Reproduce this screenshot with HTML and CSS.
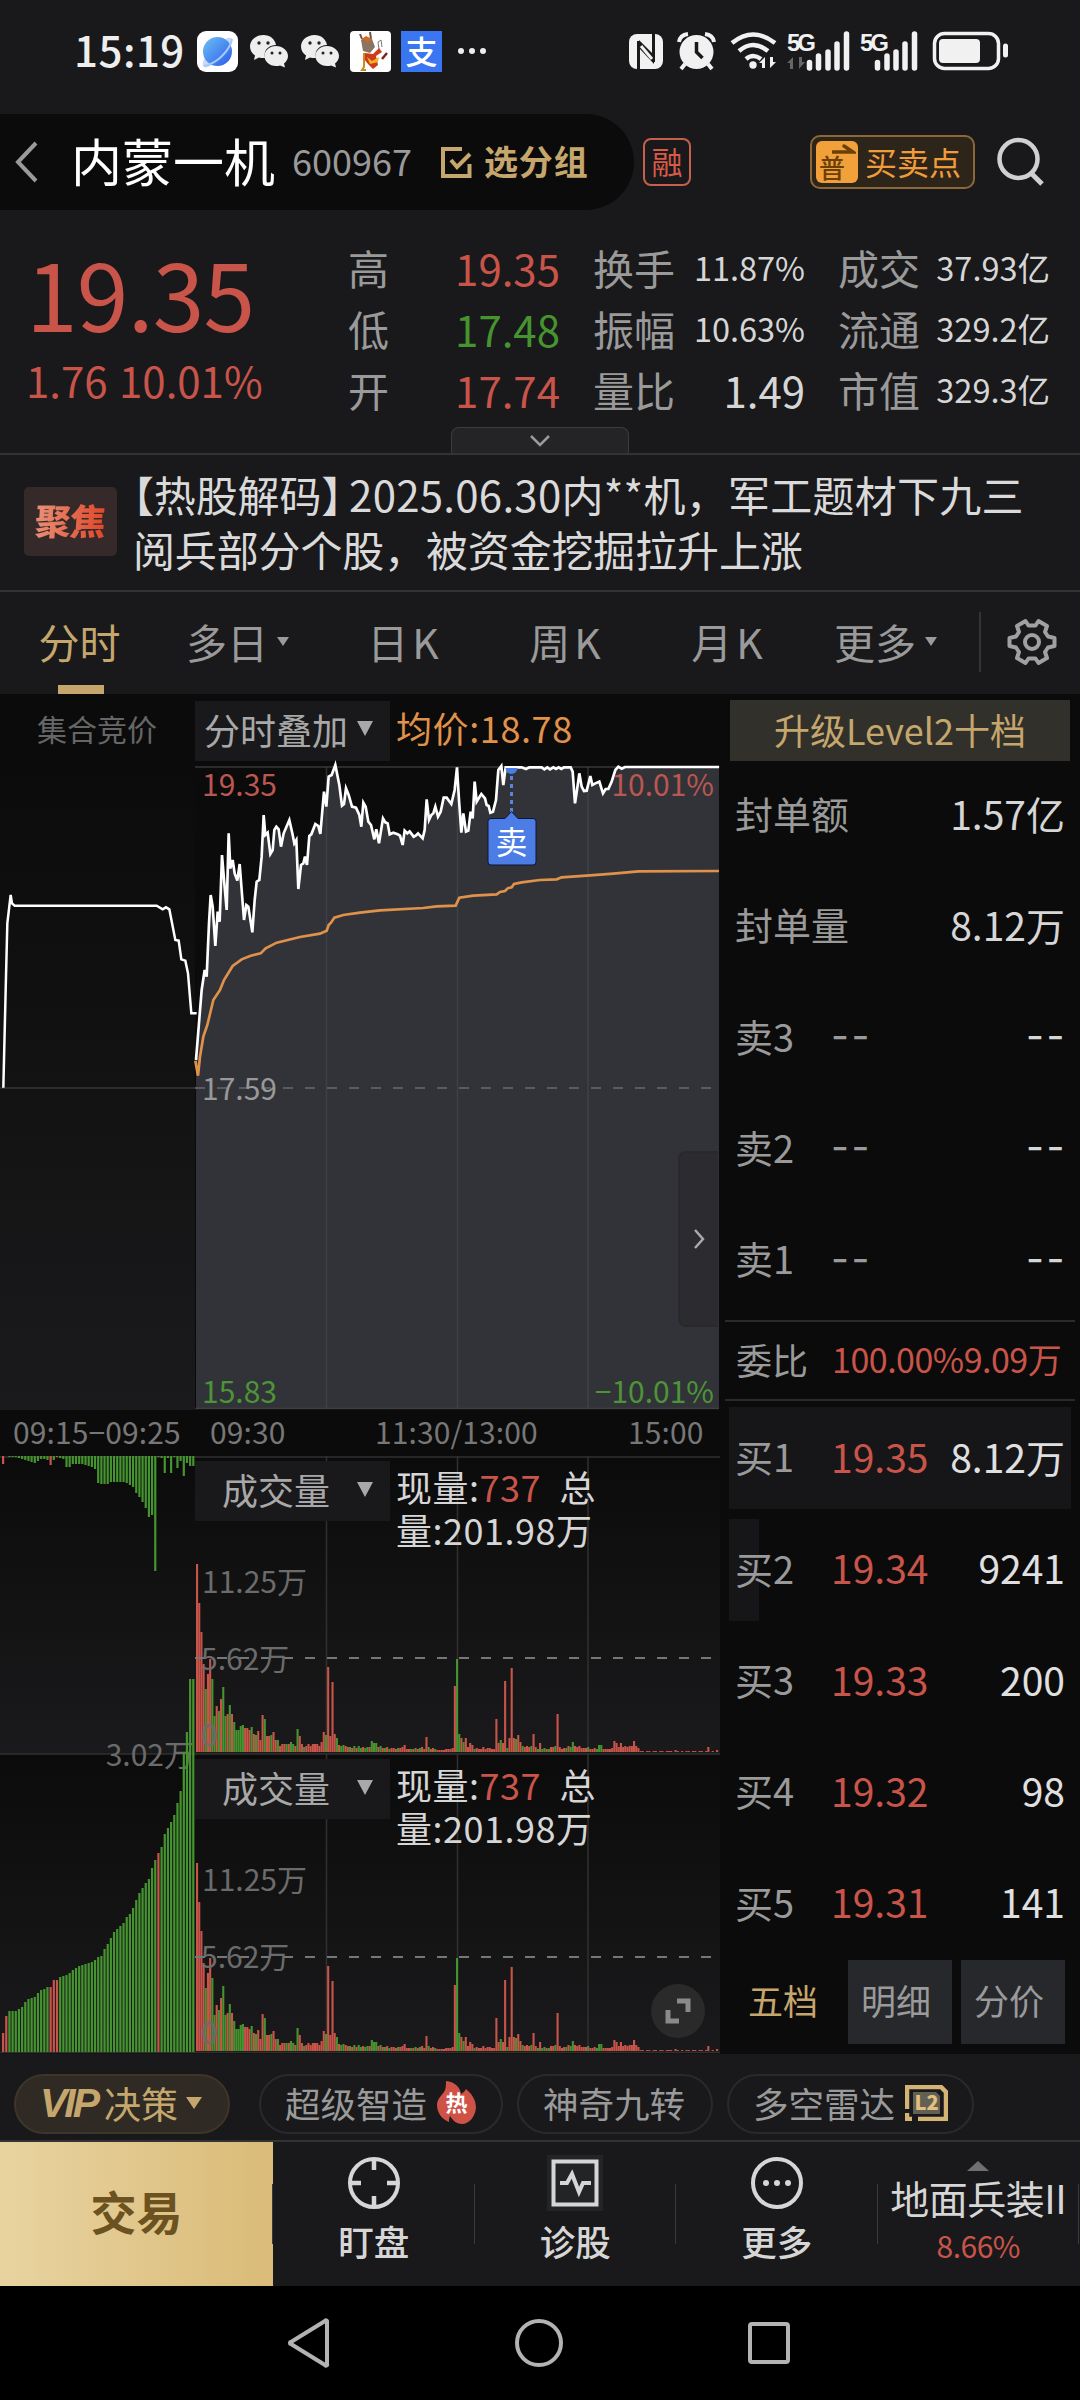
FILE: index.html
```html
<!DOCTYPE html>
<html lang="zh-CN">
<head>
    <meta charset="UTF-8">
    <meta name="viewport" content="width=device-width, initial-scale=1.0">
    <title>内蒙一机 600967</title>
    <link rel="stylesheet" href="styles.css">
</head>
<body>
    <!-- Status bar -->
    <div class="statusbar">
        <span class="clock">15:19</span>
        <svg class="st-app" width="41" height="41" viewBox="0 0 41 41">
            <defs>
                <linearGradient id="globe" x1="0" y1="0" x2="1" y2="1"><stop offset="0" stop-color="#6cc0f5"/><stop offset="1" stop-color="#2c5be8"/></linearGradient>
            </defs>
            <rect width="41" height="41" rx="9" fill="#fff"/>
            <path d="M7 36C3 34 9 22 17 15S34 5 35 8s-3 10-10 17S11 38 7 36z" fill="#c9d9fb"/>
            <circle cx="20.500" cy="20.500" r="14.500" fill="url(#globe)"/>
            <path d="M7 35c5-1 12-4 18-10S34 14 35 8" fill="none" stroke="#a9c8fa" stroke-width="2"/>
        </svg>
        <svg class="st-wechat" width="38" height="34" viewBox="0 0 38 34">
            <path d="M13.500 1C6 1 0 6 0 12.500c0 4 2 7 5 9L4 26l5-2.500c2 .5 4 .8 6 .5C13 16 19 11 26 11 25 5 20 1 13.500 1z" fill="#eee"/>
            <path d="M26 12c-6.500 0-11.500 4.500-11.500 10S19.500 32 26 32c1.500 0 3-.2 4-.6l5 2-1-4c2.500-1.800 4-4.500 4-7.400C38 16.500 32.500 12 26 12z" fill="#eee"/>
            <circle cx="9" cy="9" r="1.700" fill="#222"/><circle cx="18" cy="9" r="1.700" fill="#222"/><circle cx="22" cy="19" r="1.500" fill="#222"/><circle cx="30" cy="19" r="1.500" fill="#222"/>
        </svg>
        <svg class="st-wechat" width="38" height="34" viewBox="0 0 38 34">
            <path d="M13.500 1C6 1 0 6 0 12.500c0 4 2 7 5 9L4 26l5-2.500c2 .5 4 .8 6 .5C13 16 19 11 26 11 25 5 20 1 13.500 1z" fill="#eee"/>
            <path d="M26 12c-6.500 0-11.500 4.500-11.500 10S19.500 32 26 32c1.500 0 3-.2 4-.6l5 2-1-4c2.500-1.800 4-4.500 4-7.400C38 16.500 32.500 12 26 12z" fill="#eee"/>
            <circle cx="9" cy="9" r="1.700" fill="#222"/><circle cx="18" cy="9" r="1.700" fill="#222"/><circle cx="22" cy="19" r="1.500" fill="#222"/><circle cx="30" cy="19" r="1.500" fill="#222"/>
        </svg>
        <svg class="st-photo" width="41" height="41" viewBox="0 0 41 41">
            <rect width="41" height="41" rx="4" fill="#fff"/>
            <path d="M10 3l2 5M20 1l1 7" stroke="#665546" stroke-width="2"/>
            <path d="M11 9l4-3 7 2 3 8-5 6-7-2z" fill="#8b7560"/>
            <path d="M12 8l4-3 6 3-4 3z" fill="#d9661c"/>
            <path d="M15 22l8 1 6-6 3 4-6 4 2 9-5 4-5-5-4-5z" fill="#cf3a1c"/>
            <path d="M17 26l5 4 7-4-1 5-8 2z" fill="#f0b429"/>
            <path d="M29 18l-1-7 3-2 1 7" stroke="#777" fill="none"/>
            <path d="M14 22v14l-2 3h4" stroke="#c98b1e" stroke-width="2" fill="none"/>
            <path d="M32 28l5-6" stroke="#7b2614" stroke-width="2.500"/>
        </svg>
        <span class="st-alipay">支</span>
        <svg class="st-dots" width="30" height="8" viewBox="0 0 30 8"><circle cx="4" cy="4" r="3" fill="#eee"/><circle cx="15" cy="4" r="3" fill="#eee"/><circle cx="26" cy="4" r="3" fill="#eee"/></svg>

        <svg class="st-right" width="380" height="42" viewBox="630 30 380 42">
            <rect x="630" y="34" width="34" height="35" rx="8" fill="#f1f1f1"/>
            <path d="M639.500 70V41M654.500 62V33" fill="none" stroke="#19191b" stroke-width="3"/>
            <path d="M640 40l15 15v9L640 48z" fill="#19191b"/>
            <path d="M642 46l11 13" stroke="#f1f1f1" stroke-width="3"/>
            <circle cx="697.500" cy="52" r="17" fill="#f1f1f1"/>
            <path d="M680 42q1-7 9-8M706 34q8 1 9 8" stroke="#f1f1f1" stroke-width="4" fill="none"/>
            <path d="M686 64l-4 5M709 64l4 5" stroke="#f1f1f1" stroke-width="4"/>
            <path d="M697.500 42v10l6 6" stroke="#19191b" stroke-width="3.500" fill="none"/>
            <path d="M733 43q21-17 43 0M740 51q14-12 29 0M747 59q7-6 15 0" stroke="#f1f1f1" stroke-width="4.500" fill="none"/>
            <circle cx="754" cy="65" r="3.700" fill="#f1f1f1"/>
            <path d="M760 63l6-6v11h-3v-5zM777 62l-6 6V57h3v5z" fill="#f1f1f1"/>
            <text x="788" y="51" class="st-5g">5G</text>
            <path d="M788 63l6-6v12h-3v-6zM806 62l-6 7V57h3v5z" fill="#666"/>
            <path d="M810.500 62.500v5.500M819.500 56v12M829 52v16M838 44v24M847.500 34v34" stroke="#f1f1f1" stroke-width="5.500" stroke-linecap="round"/>
            <text x="861" y="51" class="st-5g">5G</text>
            <path d="M878.500 62.500v5.500M888 56v12M897 52v16M906 44v24M915.500 34v34" stroke="#f1f1f1" stroke-width="5.500" stroke-linecap="round"/>
            <rect x="935.500" y="33.500" width="64" height="35" rx="10" fill="none" stroke="#f1f1f1" stroke-width="3.500"/>
            <rect x="940" y="39" width="41" height="24" rx="4" fill="#f1f1f1"/>
            <path d="M1006.500 46v9" stroke="#f1f1f1" stroke-width="5" stroke-linecap="round"/>
        </svg>
    </div>

    <!-- Stock title -->
    <header class="topbar">
        <div class="title-pill">
            <svg width="24" height="42" viewBox="0 0 24 42"><path d="M21 2L3 21l18 19" fill="none" stroke="#9a9a9a" stroke-width="4"/></svg>
            <h1>内蒙一机</h1>
            <span class="code">600967</span>
            <svg class="check" width="31" height="31" viewBox="0 0 31 31"><path d="M21 2H2v27h26.500V17M10 13l6 7L29 7" fill="none" stroke="#c5a76e" stroke-width="4"/></svg>
            <span class="group">选分组</span>
        </div>
        <span class="margin-tag">融</span>
        <div class="trade-points">
            <span class="pu"><svg width="24" height="10" viewBox="0 0 24 10"><path d="M1 8h20L12 2" fill="none" stroke="#6b3f08" stroke-width="3.500" stroke-linecap="round"/></svg><b>普</b></span>
            <span class="tp-label">买卖点</span>
        </div>
        <svg class="search" width="48" height="50" viewBox="0 0 48 50"><circle cx="21.500" cy="22" r="19" fill="none" stroke="#d0d0d0" stroke-width="4.500"/><path d="M34 36l11 11" stroke="#d0d0d0" stroke-width="5"/></svg>
    </header>

    <!-- Quote -->
    <section class="quote">
        <div class="last">
            <div class="price">19.35</div>
            <div class="change">1.76 10.01%</div>
        </div>
        <dl class="stats">
            <dt>高</dt><dd class="up big">19.35</dd><dt>换手</dt><dd>11.87%</dd><dt>成交</dt><dd>37.93亿</dd>
            <dt>低</dt><dd class="down big">17.48</dd><dt>振幅</dt><dd>10.63%</dd><dt>流通</dt><dd>329.2亿</dd>
            <dt>开</dt><dd class="up big">17.74</dd><dt>量比</dt><dd class="big">1.49</dd><dt>市值</dt><dd>329.3亿</dd>
        </dl>
        <div class="pull"><svg width="22" height="13" viewBox="0 0 22 13"><path d="M2 2l9 9 9-9" fill="none" stroke="#9a9a9a" stroke-width="2.500"/></svg></div>
    </section>

    <section class="news">
        <span class="focus"><i>聚焦</i></span>
        <p><span class="tag">【热股解码】</span><span class="lead">2025.06.30内**机，军工题材下九三</span><br>阅兵部分个股，被资金挖掘拉升上涨</p>
    </section>

    <nav class="periods">
        <a class="active">分时</a>
        <a class="more">多日<i class="tri"></i></a>
        <a class="k">日K</a>
        <a class="k">周K</a>
        <a class="k">月K</a>
        <a class="more">更多<i class="tri"></i></a>
        <span class="gear"><svg width="52" height="52" viewBox="0 0 52 52"><path d="M19.500 5l3 4.500h7l3-4.500 8.500 5-2 6 3 4.500 6.500 1.500v8L42 31.500 39 36l2 6-8.500 5-3-4.500h-7l-3 4.500-8.500-5 2-6-3-4.500L3.500 30v-8l6.500-1.500 3-4.500-2-6z" fill="none" stroke="#a0a0a0" stroke-width="4" stroke-linejoin="round"/><circle cx="26" cy="26" r="7" fill="none" stroke="#a0a0a0" stroke-width="4"/></svg></span>
    </nav>

    <main class="board">
        <div class="charts">
            <div class="chart-head">
                <span class="auction">集合竞价</span>
                <span class="select">分时叠加<i class="arrow"></i></span>
                <span class="avg">均价:18.78</span>
            </div>

            <div class="price-chart">
                <svg width="720" height="650" viewBox="0 760 720 650">
                    <defs>
                        <linearGradient id="panel" x1="0" y1="0" x2="0" y2="1"><stop offset="0" stop-color="#0b0b0b"/><stop offset="1" stop-color="#1a1a1c"/></linearGradient>
                    </defs>
                    <rect x="0" y="760" width="195" height="650" fill="url(#panel)"/>
                    <path d="M195 767H720M0 1088H196" stroke="#2c2c2d" stroke-width="2"/>
                    <g transform="translate(0 690) scale(.33333)">
                        <polygon id="area" fill="#323338"/>
                    </g>
                    <path d="M326.500 767V1409M457.500 767V1409M588 767V1409M195 1408.500H719" stroke="#48494c" stroke-width="1.500" opacity=".6"/>
                    <path d="M195 1088H716" stroke="#5a5b5f" stroke-width="2" stroke-dasharray="10 12"/>
                    <g fill="none" stroke-width="7.500" transform="translate(0 690) scale(.33333)">
                        <polyline stroke="#fff" points="10,1193 17,900 22,700 32,615 36,640 44,647 470,647 488,658 498,652 508,658 526,750 536,752 544,808 556,812 564,850 574,970 590,970"/>
                        <polyline id="average" stroke="#e0924a" stroke-width="8" points="586,1112 594,1157 600,1100 610,1040 622,1005 640,930 660,900 672,870 698,828 725,808 750,798 782,790 797,775 830,758 900,741 960,731 980,722 986,705 993,698 1003,683 1030,675 1080,668 1140,661 1270,654 1310,649 1367,647 1378,623 1420,617 1490,613 1500,606 1515,603 1523,595 1535,592 1542,582 1565,577 1620,570 1670,568 1685,562 1770,556 1840,551 1915,544 2157,543"/>
                        <polyline id="line" stroke="#fff" stroke-width="8" points="588,1110 605,900 614,840 620,860 627,700 632,615 638,650 646,768 653,665 659,695 666,495 673,580 680,660 686,430 691,535 698,510 704,550 712,572 719,522 725,600 732,690 739,645 745,650 757,727 764,630 770,575 778,570 785,500 791,375 796,435 803,428 811,492 818,480 823,420 829,410 836,418 843,470 851,430 868,390 877,430 883,460 889,450 895,597 903,525 910,520 915,500 921,525 928,438 934,433 946,402 955,408 961,432 972,305 979,350 986,260 995,255 1006,225 1018,285 1026,347 1032,342 1038,295 1046,315 1056,350 1068,353 1078,375 1084,410 1090,338 1097,350 1105,395 1113,405 1123,448 1129,418 1137,460 1149,385 1156,397 1163,400 1169,433 1180,428 1193,433 1200,437 1208,465 1214,422 1222,430 1229,424 1241,440 1248,436 1254,430 1268,445 1274,420 1280,328 1287,390 1294,375 1300,370 1306,350 1314,380 1322,365 1331,323 1340,323 1354,342 1364,300 1371,232 1377,330 1384,428 1390,370 1398,425 1405,422 1412,365 1418,385 1424,275 1430,335 1436,325 1444,312 1455,325 1460,345 1466,348 1471,368 1479,365 1488,330 1495,240 1504,228 1510,285 1517,232 1565,232 1578,237 1588,232 1625,232 1633,238 1642,232 1650,238 1660,232 1668,237 1676,232 1684,237 1692,232 1712,232 1718,245 1725,340 1731,300 1738,250 1745,290 1752,303 1760,302 1771,258 1777,285 1786,280 1798,275 1809,310 1817,297 1825,297 1835,275 1846,240 1855,230 1865,236 1875,231 2157,231"/>
                    </g>
                    <path d="M505.500 768a6 6 0 0 0 12 0z" fill="#4c7ce6"/>
                    <path d="M511.500 776V812" stroke="#5d83d8" stroke-width="3" stroke-dasharray="4 4"/>
                    <path d="M491 818.500H505l6.500-7 6.500 7H533q3 0 3 3V862q0 3-3 3H491q-3 0-3-3V821.500q0-3 3-3z" fill="#4c7ce6" stroke="#0c1636"/>
                    <text x="511.500" y="854" text-anchor="middle" class="sell">卖</text>
                    <g class="axis">
                        <text x="202" y="796" class="r">19.35</text>
                        <text x="714" y="796" class="r" text-anchor="end">10.01%</text>
                        <text x="202" y="1100">17.59</text>
                        <text x="202" y="1403" class="g">15.83</text>
                        <text x="714" y="1403" class="g" text-anchor="end">−10.01%</text>
                    </g>
                </svg>
                <span class="drawer"><svg width="12" height="20" viewBox="0 0 12 20"><path d="M2 1l8 9-8 9" fill="none" stroke="#aaa" stroke-width="2.500"/></svg></span>
            </div>

            <div class="times"><span>09:15−09:25</span><span>09:30</span><span>11:30/13:00</span><span>15:00</span></div>

            <div class="volume">
                <svg width="720" height="298" viewBox="0 0 720 298">
                    <rect y="0" width="720" height="298" fill="url(#panel)"/>
                    <path d="M0 1H720M326.500 0V296M457.500 0V296M588 0V296" stroke="#303031" stroke-width="1.500"/>
                    <g id="auction-bars"></g>
                    <g class="session-bars"></g>
                    <path d="M195 202H712" stroke="#777" stroke-width="2" stroke-dasharray="10 12"/>
                    <g class="axis dim"><text x="202" y="137">11.25万</text><text x="201" y="214">5.62万</text><text x="201" y="290">0</text></g>
                </svg>
                <div class="vol-head"><span class="select">成交量<i class="arrow"></i></span><p>现量:<em>737</em>&ensp;总<br>量:201.98万</p></div>
            </div>
            <div class="volume">
                <svg width="720" height="299" viewBox="0 0 720 299">
                    <rect y="0" width="720" height="299" fill="url(#panel)"/>
                    <path d="M0 0H720M326.500 0V298M457.500 0V298M588 0V298M0 298.500H720" stroke="#303031" stroke-width="1.500"/>
                    <g class="axis dim"><text x="194" y="12" text-anchor="end">3.02万</text></g>
                    <g id="match-bars"></g>
                    <g class="session-bars" transform="translate(0 1)"></g>
                    <path d="M195 203H712" stroke="#777" stroke-width="2" stroke-dasharray="10 12"/>
                    <g class="axis dim"><text x="202" y="137">11.25万</text><text x="201" y="214">5.62万</text><text x="201" y="290">0</text></g>
                </svg>
                <div class="vol-head"><span class="select">成交量<i class="arrow"></i></span><p>现量:<em>737</em>&ensp;总<br>量:201.98万</p></div>
                <span class="expand"><svg width="26" height="26" viewBox="0 0 26 26"><path d="M12 3h11v11M3 12v11h11" fill="none" stroke="#8a8a8a" stroke-width="5"/></svg></span>
            </div>
        </div>

        <!-- Order book -->
        <aside class="book">
            <a class="level2">升级Level2十档</a>
            <div class="row"><span>封单额</span><b>1.57亿</b></div>
            <div class="row"><span>封单量</span><b>8.12万</b></div>
            <div class="row"><span>卖3</span><s>--</s><b class="none">--</b></div>
            <div class="row"><span>卖2</span><s>--</s><b class="none">--</b></div>
            <div class="row"><span>卖1</span><s>--</s><b class="none">--</b></div>
            <div class="ratio"><span>委比</span><em>100.00%9.09万</em></div>
            <div class="row bid full"><span>买1</span><em>19.35</em><b>8.12万</b></div>
            <div class="row bid part"><span>买2</span><em>19.34</em><b>9241</b></div>
            <div class="row bid"><span>买3</span><em>19.33</em><b>200</b></div>
            <div class="row bid"><span>买4</span><em>19.32</em><b>98</b></div>
            <div class="row bid"><span>买5</span><em>19.31</em><b>141</b></div>
            <div class="book-tabs"><a class="on">五档</a><a>明细</a><a>分价</a></div>
        </aside>
    </main>

    <section class="tools">
        <a class="vip"><b>VIP</b>决策<i class="tri"></i></a>
        <a class="t1">超级智造<svg width="40" height="44" viewBox="0 0 40 44"><path d="M9 0c8 1 14 5 15 13 2-1 4-3 5-5 6 5 10 11 10 19-1 9-7 16-14 16-5 0-9-3-12-8-1 2-1 4-1 6C5 38 0 32 0 24 0 17 6 14 8 9c1-3 1-6 1-9z" fill="#cf5246"/><text x="19.500" y="30" text-anchor="middle" class="hot">热</text></svg></a>
        <a class="t2">神奇九转</a>
        <a class="t3">多空雷达<svg width="43" height="36" viewBox="0 0 43 36"><path d="M2 24V2h34l5 5v27H13M2 28v6h5" fill="none" stroke="#d3b475" stroke-width="4.500"/><path d="M8 7h23l4 4v18H8z" fill="#625f55"/><text x="21.500" y="25" text-anchor="middle" class="l2">L2</text></svg></a>
    </section>

    <footer class="actions">
        <a class="trade">交易</a>
        <a><svg width="56" height="56" viewBox="0 0 56 56"><circle cx="28" cy="28" r="24" fill="none" stroke="#d6d6d6" stroke-width="4"/><path d="M28 4v11M28 41v11M4 28h11M41 28h11" stroke="#d6d6d6" stroke-width="4.500"/></svg>盯盘</a>
        <a><svg width="56" height="56" viewBox="0 0 56 56"><path d="M0 0h56v56H0z" fill="#222426"/><path d="M6.500 6.500h43v43h-43z" fill="none" stroke="#d6d6d6" stroke-width="4"/><path d="M13 28h7l5-9 7 18 4-9h8" fill="none" stroke="#d6d6d6" stroke-width="4"/></svg>诊股</a>
        <a><svg width="56" height="56" viewBox="0 0 56 56"><circle cx="28" cy="28" r="24" fill="none" stroke="#d6d6d6" stroke-width="4"/><circle cx="17" cy="28" r="3" fill="#d6d6d6"/><circle cx="28" cy="28" r="3" fill="#d6d6d6"/><circle cx="39" cy="28" r="3" fill="#d6d6d6"/></svg>更多</a>
        <a class="sector"><i></i><span>地面兵装II</span><em>8.66%</em></a>
    </footer>

    <div class="sysnav">
        <svg width="44" height="50" viewBox="0 0 44 50"><path d="M40 4v42a1 1 0 0 1-2 1L4 26a1 1 0 0 1 0-2L38 3a1 1 0 0 1 2 1z" fill="none" stroke="#b3b3b3" stroke-width="4"/></svg>
        <svg width="50" height="50" viewBox="0 0 50 50"><circle cx="25" cy="25" r="22" fill="none" stroke="#b3b3b3" stroke-width="4"/></svg>
        <svg width="44" height="44" viewBox="0 0 44 44"><rect x="3" y="3" width="38" height="38" rx="2" fill="none" stroke="#b3b3b3" stroke-width="4"/></svg>
    </div>

    <script src="chart.js"></script>
</body>
</html>
```
FILE: styles.css
```css
* {
    box-sizing: border-box;
}
body {
    margin: 0;
    width: 1080px;
    height: 2400px;
    overflow: hidden;
    background: #19191b;
    color: #d6d6d6;
    font-family: "Noto Sans CJK SC", sans-serif;
    font-size: 38px;
    line-height: 1;
}
svg {
    display: block;
    flex: none;
}
i, em {
    font-style: normal;
}
h1, p, dl, dd {
    margin: 0;
    font-weight: normal;
}
.up, em {
    color: #c8544a;
}
.down {
    color: #45942f;
}

/* Status bar */
.statusbar {
    display: flex;
    align-items: center;
    height: 114px;
    padding: 0 71px 12px 74px;
}
.clock {
    width: 123px;
    padding-bottom: 5px;
    color: #eee;
    font-size: 42px;
    font-weight: 500;
    letter-spacing: .5px;
}
.st-wechat {
    margin-left: 12px;
}
.st-app + .st-wechat + .st-wechat {
    margin-left: 13px;
}
.st-photo {
    margin-left: 11px;
}
.st-alipay {
    width: 41px;
    height: 41px;
    margin-left: 10px;
    background: #3a75f2;
    color: #fff;
    font-size: 32px;
    font-weight: 500;
    line-height: 38px;
    text-align: center;
}
.st-dots {
    margin-left: 15px;
}
.st-right {
    margin-left: auto;
}
.st-5g {
    fill: #f1f1f1;
    font-family: "Liberation Sans", sans-serif;
    font-size: 24px;
    font-weight: bold;
    letter-spacing: -3px;
}

/* Title */
.topbar {
    display: flex;
    align-items: center;
    height: 96px;
}
.title-pill {
    display: flex;
    align-items: center;
    width: 634px;
    height: 96px;
    padding-left: 15px;
    background: #0b0b0b;
    border-radius: 0 48px 48px 0;
}
.title-pill h1 {
    margin-left: 32px;
    padding-bottom: 3px;
    color: #fff;
    font-size: 51px;
}
.code {
    margin-left: 17px;
    padding-bottom: 4px;
    color: #9a9a9a;
    font-size: 36px;
}
.check {
    margin-left: 29px;
}
.group {
    margin-left: 12px;
    padding-bottom: 3px;
    color: #c5a76e;
    font-size: 34px;
    font-weight: bold;
    letter-spacing: .9px;
}
.margin-tag {
    width: 48px;
    height: 48px;
    margin-left: 9px;
    border: 2px solid #c4604c;
    border-radius: 8px;
    color: #d85a47;
    font-size: 31px;
    line-height: 42px;
    text-align: center;
}
.trade-points {
    display: flex;
    align-items: center;
    width: 165px;
    height: 54px;
    margin-left: 119px;
    padding-left: 4px;
    border: 2px solid #8c6838;
    border-radius: 10px;
    background: #2d241a;
    color: #f09c39;
    font-size: 32px;
}
.tp-label {
    padding-bottom: 3px;
}
.pu {
    display: flex;
    flex-direction: column;
    width: 42px;
    height: 42px;
    margin-right: 7px;
    padding: 3px 0 0 3px;
    border-radius: 6px;
    background: #f2a03a;
    color: #6b3f08;
}
.pu svg {
    margin-left: 13px;
}
.pu b {
    font-size: 26px;
    line-height: 26px;
    font-weight: 500;
}
.search {
    margin-left: 22px;
}

/* Quote */
.quote {
    position: relative;
    display: flex;
    height: 245px;
    border-bottom: 2px solid #333334;
}
.last {
    width: 350px;
    padding-left: 26px;
    color: #c8544a;
}
.price {
    margin-top: 35px;
    font-size: 93px;
    letter-spacing: -.8px;
}
.change {
    margin-top: 21px;
    font-size: 42px;
    word-spacing: 2px;
    white-space: nowrap;
}
.stats {
    display: grid;
    grid-template-columns: 80px 132px 115px 130px 115px 130px;
    grid-auto-rows: 61px;
    align-items: center;
    margin: 27px 0 0 -2px;
}
.stats dt {
    color: #9a9a9a;
    font-size: 41px;
}
.stats dt:nth-of-type(3n+2), .stats dt:nth-of-type(3n) {
    padding-left: 33px;
    white-space: nowrap;
}
.stats dd {
    font-size: 32.500px;
    text-align: right;
    white-space: nowrap;
}
.stats .big {
    font-size: 42px;
}
.pull {
    position: absolute;
    left: 451px;
    bottom: 0;
    display: flex;
    align-items: center;
    justify-content: center;
    width: 178px;
    height: 26px;
    border: 1px solid #3c3c3e;
    border-bottom: 0;
    border-radius: 8px 8px 0 0;
    background: #242426;
}

.news {
    display: flex;
    height: 137px;
    border-bottom: 2px solid #333334;
    color: #dadada;
}
.focus {
    width: 93px;
    height: 69px;
    margin: 32px 16px 0 24px;
    border-radius: 5px;
    background: #352a29;
    text-align: center;
    line-height: 64px;
}
.focus i {
    display: inline-block;
    font-size: 36px;
    font-weight: 900;
    letter-spacing: -1px;
    color: transparent;
    background: linear-gradient(90deg, #e89077, #e0482b);
    background-clip: text;
    -webkit-background-clip: text;
    transform: skewX(-4deg);
}
.news p {
    padding-top: 11px;
    font-size: 42px;
    line-height: 55px;
    letter-spacing: -.15px;
    white-space: nowrap;
}
.tag {
    margin-right: 7px;
    font-feature-settings: "halt";
}
.lead {
    letter-spacing: .25px;
}

/* Period tabs */
.periods {
    display: flex;
    height: 102px;
    color: #9a9a9a;
    font-size: 41px;
}
.periods a {
    display: flex;
    align-items: center;
    justify-content: center;
    position: relative;
    width: 162px;
    padding-bottom: 3px;
}
.periods .more {
    padding-right: 11px;
}
.periods .k {
    letter-spacing: 4px;
}
.periods .active {
    padding-right: 3px;
    color: #c5a76e;
}
.periods .active::after {
    content: "";
    position: absolute;
    left: 58px;
    bottom: 0;
    width: 46px;
    height: 9px;
    background: #c5a76e;
}
.tri {
    margin-left: 9px;
    border: 6px solid transparent;
    border-top: 9px solid currentColor;
    border-bottom: 0;
}
.gear {
    height: 60px;
    margin: 20px 0 0 7px;
    padding: 4px 0 0 25px;
    border-left: 2px solid #343436;
}

/* Charts */
.board {
    display: flex;
    height: 1360px;
    background: #0b0b0b;
}
.charts {
    width: 720px;
}
.chart-head {
    display: flex;
    align-items: center;
    height: 67px;
    padding-top: 6px;
}
.auction {
    width: 195px;
    padding: 0 0 6px 37px;
    color: #666;
    font-size: 30px;
}
.select {
    display: flex;
    align-items: center;
    justify-content: space-between;
    width: 195px;
    height: 60px;
    padding: 0 17px 4px 9px;
    background: #19191b;
    color: #a8a8a8;
    font-size: 36px;
}
.arrow {
    border: 8px solid transparent;
    border-top: 15px solid currentColor;
    border-bottom: 0;
}
.avg {
    margin-left: 6px;
    padding-bottom: 7px;
    color: #e0924a;
    font-size: 36px;
    letter-spacing: .6px;
}
.price-chart {
    position: relative;
    height: 650px;
    margin-top: -1px;
}
.axis {
    fill: #999;
    font-size: 30px;
}
.axis .r {
    fill: #b95750;
}
.axis .g {
    fill: #4d9438;
}
.dim {
    fill: #6b6b6b;
    font-size: 30px;
}
.sell {
    fill: #fff;
    font-size: 32px;
}
.drawer {
    position: absolute;
    top: 391px;
    right: 2px;
    display: flex;
    align-items: center;
    justify-content: center;
    width: 40px;
    height: 176px;
    border: 2px solid #29292b;
    border-right: 0;
    border-radius: 8px 0 0 8px;
    background: rgba(38, 38, 40, .5);
}
.times {
    display: grid;
    grid-template-columns: 197px 165px 253px auto;
    height: 46px;
    padding: 6px 0 0 13px;
    color: #777;
    font-size: 30px;
    letter-spacing: .1px;
    white-space: nowrap;
}
.volume {
    position: relative;
    height: 298px;
}
.volume svg {
    overflow: visible;
}
.vol-head {
    position: absolute;
    top: 5px;
    left: 195px;
    display: flex;
}
.vol-head .select {
    padding-left: 27px;
}
.vol-head p {
    padding: 4px 0 0 6px;
    font-size: 36px;
    line-height: 43px;
    letter-spacing: .5px;
    white-space: nowrap;
}
.expand {
    position: absolute;
    left: 651px;
    top: 230px;
    display: flex;
    align-items: center;
    justify-content: center;
    width: 54px;
    height: 54px;
    border-radius: 50%;
    background: #2a2a2b;
}

/* Order book */
.book {
    width: 360px;
    padding: 6px 5px 0;
}
.book b {
    font-weight: normal;
}
.level2 {
    display: block;
    width: 340px;
    height: 61px;
    margin-left: 5px;
    background: #32302a;
    color: #c5a76e;
    font-size: 36px;
    line-height: 58px;
    text-align: center;
}
.row {
    display: grid;
    grid-template-columns: 96px 1fr auto;
    align-items: center;
    height: 102px;
    margin: 0 4px 9.300px;
    padding: 0 6px 4px;
}
.row b {
    grid-column: 3;
}
.row b, .row em {
    font-size: 39px;
}
.level2 + .row {
    margin-top: 3px;
}
.row span, .row s {
    color: #9a9a9a;
    text-decoration: none;
    white-space: nowrap;
}
.row s, .row .none {
    font-family: Inter, sans-serif;
    letter-spacing: 2.500px;
}
.row s {
    font-size: 39px;
}
.row .none {
    margin-right: -2px;
}
.bid {
    color: #e0e0e0;
}
.full {
    background: #161618;
}
.part {
    background: linear-gradient(90deg, #161618 30px, transparent 30px);
}
.ratio {
    display: flex;
    align-items: center;
    height: 81px;
    margin: 0 0 6px;
    padding: 0 0 4px 11px;
    border: solid #2a2a2b;
    border-width: 2px 0;
    color: #9a9a9a;
    font-size: 36px;
}
.ratio em {
    margin-left: 24px;
    font-size: 34px;
    letter-spacing: -.5px;
    white-space: nowrap;
}
.book-tabs {
    display: flex;
    gap: 9px;
    margin: -4px 0 0 10px;
    color: #9a9a9a;
    font-size: 35px;
}
.book-tabs a {
    width: 104px;
    height: 84px;
    padding-right: 8px;
    background: #27282c;
    line-height: 80px;
    text-align: center;
}
.book-tabs .on {
    background: none;
    color: #c5a76e;
}

/* Tool chips */
.tools {
    display: flex;
    align-items: center;
    height: 88px;
    padding: 14px 0 0 14px;
    border-bottom: 2px solid #333334;
}
.tools a {
    display: flex;
    align-items: center;
    height: 60px;
    padding: 0 0 2px 24px;
    border: 2px solid #2a2a2c;
    border-radius: 30px;
    color: #9a9a9a;
    font-size: 35.500px;
}
.tools svg {
    margin-left: 10px;
}
.tools .vip {
    width: 216px;
    background: #302a24;
    border-color: #3d3528;
    color: #c5a76e;
    font-size: 37px;
}
.vip b {
    margin-right: 7px;
    font: italic bold 41px "Liberation Sans", sans-serif;
    letter-spacing: -3px;
}
.vip .tri {
    margin-left: 8px;
    border-width: 12px 8px 0;
}
.t1 {
    width: 244px;
    margin-left: 29px;
}
.t2 {
    width: 196px;
    margin-left: 14px;
}
.t3 {
    width: 247px;
    margin-left: 14px;
}
.hot {
    fill: #fff;
    font-size: 22px;
    font-weight: bold;
}
.l2 {
    fill: #e2c07c;
    font-size: 20px;
    font-weight: 900;
}

/* Bottom actions */
.actions {
    display: flex;
    height: 144px;
}
.actions a {
    display: flex;
    flex-direction: column;
    align-items: center;
    position: relative;
    width: 201.500px;
    padding-top: 13px;
    font-size: 35.500px;
    font-weight: 500;
    white-space: nowrap;
}
.actions a svg {
    margin-bottom: 12px;
}
.actions a::after {
    content: "";
    position: absolute;
    top: 42px;
    right: 0;
    width: 1px;
    height: 60px;
    background: #3a3a3c;
}
.actions .trade {
    width: 273px;
    padding-top: 45px;
    background: linear-gradient(90deg, #e8d3a0, #dabb78);
    color: #6b5220;
    font-size: 46px;
    font-weight: bold;
}
.actions .sector {
    padding-top: 19px;
    font-size: 39px;
    font-weight: normal;
    letter-spacing: -.5px;
}
.sector i {
    border: 11px solid transparent;
    border-bottom: 10px solid #6f6f70;
    border-top: 0;
}
.sector span {
    margin-top: 7px;
}
.sector em {
    margin-top: 13px;
    font-size: 30px;
}
.sysnav {
    display: flex;
    align-items: center;
    justify-content: space-between;
    height: 114px;
    padding: 0 289px 0 287px;
    background: #000;
}
```
FILE: chart.js
```js
// Positive values are red bars, negative values are green bars
const auction = [8, 0, -1, -1, -1, -2, -3, -4, -5, -6, -7, -5, -3, -3, -4, 9, -4, 1, -2, -3,
    -11, -11, -8, -8, -8, -8, -9, -10, -11, -13, -27, -28, -28, -28, -26, -26, -26, -26, -26, -27,
    -29, -31, -37, -41, -46, -52, -61, -59, -115, -1, -2, -17, -2, -17, -1, -12, -5, -20, -7, -10, -10];

const match = [19, 36, -41, -41, -41, -43, -45, -50, -53, -54, -55, -59, -62, -63, -65, 65, 72, 72, -75, -76,
    -77, -79, -82, -84, -86, -87, -88, -89, -90, -92, -95, -96, -103, -108, -114, -120, -123, -126, -129, -135,
    -138, -144, -152, -159, -164, -169, -173, -184, -192, 199, -205, -218, -224, -230, -237, -249, -261, -300, -320, -373, -373];

const session = [188, 149, 120, 88, -63, 78, 93, -73, -36, 46, -41, 53, -65, -36, 38, -47, 38, -30, -22, -22,
    -26, -27, 24, 24, 22, -25, 18, -17, 21, 12, 37, -33, 16, 16, -17, 20, 12, -12, 6, 8,
    8, -8, 8, -10, -8, 6, -23, 16, 8, -5, 6, 8, 6, 8, 8, 8, 6, 10, 20, -17,
    85, 16, 70, 18, -14, 7, -6, -7, 6, 5, -5, 4, -6, 4, -6, -4, 5, -4, -5, 5,
    -11, -9, -9, 5, -6, 4, -4, 5, -3, 4, 4, 3, -4, 4, 5, 7, 3, 3, -3, 3,
    -4, 3, -4, 5, 3, 15, -5, 3, 4, -3, 2, 2, 2, 2, 3, 3, 3, 4, 66, -93,
    -18, 14, -10, 14, 5, 9, 7, -3, 4, 3, 3, 5, 3, 4, 4, 3, 3, 33, 9, -12,
    9, 71, -4, 14, 84, 14, -13, 17, 10, -6, 5, 6, 5, -6, 18, 5, -3, 9, -3, -4,
    3, -3, 5, 5, -6, 38, 5, 3, 4, -4, 6, -5, -10, 6, 5, 6, 4, 4, 4, -5,
    3, 3, 4, -3, -7, -7, 3, 3, 3, 3, 4, 11, 9, 5, 9, 5, 6, 5, 6, 6,
    11, 6, 4, 1, 1, 0, 1, 1, 0, 1, 1, 0, 1, 1, 0, 1, 1, 1, 0, 2,
    1, 0, 1, 0, 1, 1, 0, 1, 1, 0, 1, 1, 0, 1, 5, 0, 1, 0, 2, 0];

function drawBars(group, values, x0, step, width, base, hang) {
    let html = '';
    values.forEach((v, i) => {
        const h = Math.abs(v);
        const x = (x0 + i * step).toFixed(2);
        const color = v > 0 ? '#c8544a' : '#45942f';
        html += `<rect x="${x}" y="${hang ? base : base - h}" width="${width}" height="${h}" fill="${color}"/>`;
    });
    group.innerHTML = html;
}

drawBars(document.getElementById('auction-bars'), auction, 2, 3.17, 2.2, 0, true);
drawBars(document.getElementById('match-bars'), match, 2, 3.17, 2.2, 298, false);
document.querySelectorAll('.session-bars').forEach(g => drawBars(g, session, 196, 2.185, 2.1, 296, false));

// Fill below the price line down to the bottom of the chart
const points = document.getElementById('line').getAttribute('points');
document.getElementById('area').setAttribute('points', points + ' 2157,2157 588,2157');
```
